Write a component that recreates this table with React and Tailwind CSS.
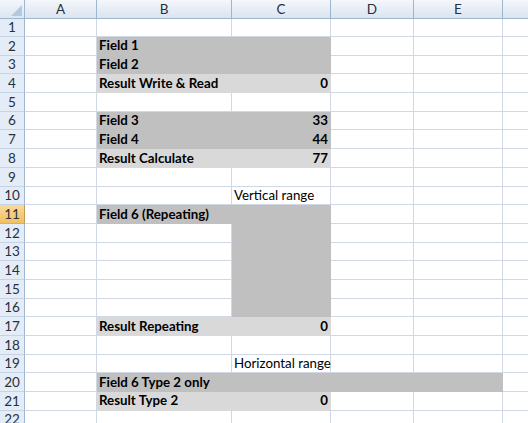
import React from 'react';

const COLS = ['A', 'B', 'C', 'D', 'E', 'F'];

const FILL = {
  dark: 'bg-[#c0c0c0] border-[#c0c0c0]',
  light: 'bg-[#d9d9d9] border-[#d9d9d9]',
  none: 'bg-white border-[#d0d7e5]',
};

// row -> { col: { text, fill, bold, align } }
const SHEET = {
  2: { B: { text: 'Field 1', fill: 'dark', bold: true }, C: { fill: 'dark' } },
  3: { B: { text: 'Field 2', fill: 'dark', bold: true }, C: { fill: 'dark' } },
  4: { B: { text: 'Result Write & Read', fill: 'light', bold: true }, C: { text: '0', fill: 'light', bold: true, align: 'right' } },
  6: { B: { text: 'Field 3', fill: 'dark', bold: true }, C: { text: '33', fill: 'dark', bold: true, align: 'right' } },
  7: { B: { text: 'Field 4', fill: 'dark', bold: true }, C: { text: '44', fill: 'dark', bold: true, align: 'right' } },
  8: { B: { text: 'Result Calculate', fill: 'light', bold: true }, C: { text: '77', fill: 'light', bold: true, align: 'right' } },
  10: { C: { text: 'Vertical range' } },
  11: { B: { text: 'Field 6 (Repeating)', fill: 'dark', bold: true }, C: { fill: 'dark' } },
  12: { C: { fill: 'dark' } },
  13: { C: { fill: 'dark' } },
  14: { C: { fill: 'dark' } },
  15: { C: { fill: 'dark' } },
  16: { C: { fill: 'dark' } },
  17: { B: { text: 'Result Repeating', fill: 'light', bold: true }, C: { text: '0', fill: 'light', bold: true, align: 'right' } },
  19: { C: { text: 'Horizontal range' } },
  20: {
    B: { text: 'Field 6 Type 2 only', fill: 'dark', bold: true },
    C: { fill: 'dark' },
    D: { fill: 'dark' },
    E: { fill: 'dark' },
  },
  21: { B: { text: 'Result Type 2', fill: 'light', bold: true }, C: { text: '0', fill: 'light', bold: true, align: 'right' } },
};

const ACTIVE_ROW = 11;

function Cell({ cell }) {
  const fill = FILL[cell?.fill || 'none'];
  return (
    <div
      className={`flex items-end whitespace-nowrap overflow-visible border-r border-b px-[2px] pb-[2px] leading-none text-[13.3px] text-black ${fill} ${
        cell?.align === 'right' ? 'justify-end' : 'justify-start'
      } ${cell?.bold ? 'font-bold' : 'font-normal'}`}
    >
      {cell?.text}
    </div>
  );
}

export default function App() {
  const rows = Array.from({ length: 22 }, (_, i) => i + 1);

  return (
    <div className="w-[528px] h-[423px] overflow-hidden bg-white font-['Lato','Open_Sans',sans-serif]">
      <div className="grid grid-cols-[25px_72px_135px_99px_83px_89px_100px] grid-rows-[19px_18px_repeat(21,18.7px)] w-[603px]">
        {/* corner */}
        <div className="relative border-r border-b border-[#9eb6ce] bg-gradient-to-b from-[#f3f6fb] to-[#dce6f2]">
          <div className="absolute right-[2px] bottom-[2px] w-0 h-0 border-l-[11px] border-l-transparent border-b-[11px] border-b-[#b7c8de]" />
        </div>
        {COLS.map(c => (
          <div
            key={c}
            className="flex items-center justify-center border-r border-b border-[#9eb6ce] bg-gradient-to-b from-[#f4f7fb] to-[#dbe4f0] text-[13.5px] text-[#27313d]"
          >
            {c}
          </div>
        ))}

        {rows.map(r => (
          <React.Fragment key={r}>
            <div
              className={`flex items-center justify-center border-r border-b text-[13.5px] text-[#27313d] ${
                r === ACTIVE_ROW
                  ? 'bg-gradient-to-b from-[#f9d99b] to-[#f1c05e] border-r-[#c29a4f] border-b-[#d9b06a]'
                  : 'bg-[#e4ecf7] border-r-[#9eb6ce] border-b-[#c5d3e4]'
              }`}
            >
              {r}
            </div>
            {COLS.map(c => (
              <Cell key={c} cell={SHEET[r]?.[c]} />
            ))}
          </React.Fragment>
        ))}
      </div>
    </div>
  );
}
